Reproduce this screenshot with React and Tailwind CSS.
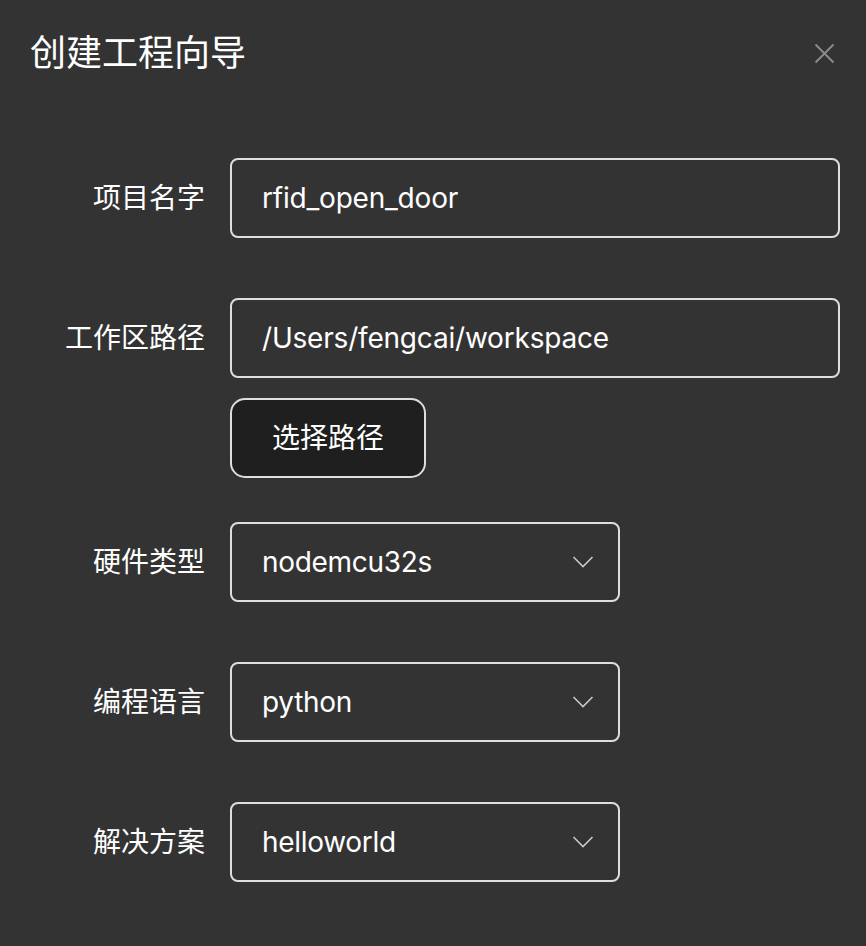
import React from 'react';

const font = { fontFamily: 'Inter, "Noto Sans CJK SC", sans-serif' };

function Chevron() {
  return (
    <svg width="22" height="14" viewBox="0 0 22 14" fill="none" className="shrink-0">
      <path d="M1.5 2L11 11.5L20.5 2" stroke="#c8c8c8" strokeWidth="1.6" />
    </svg>
  );
}

function Row({ label, children, className = '' }) {
  return (
    <div className={`flex ${className}`}>
      <div className="w-[230px] shrink-0 pr-[25px] h-[80px] flex items-center justify-end text-[28px] text-white">
        {label}
      </div>
      <div className="flex-1 min-w-0">{children}</div>
    </div>
  );
}

function TextBox({ value }) {
  return (
    <div className="h-[80px] rounded-[8px] border-2 border-[#dedee2] flex items-center px-[30px] text-[28px] text-white tracking-[-0.2px]">
      {value}
    </div>
  );
}

function SelectBox({ value }) {
  return (
    <div className="w-[390px] h-[80px] rounded-[8px] border-2 border-[#dedee2] flex items-center justify-between pl-[30px] pr-[24px] text-[28px] text-white tracking-[-0.3px]">
      <span>{value}</span>
      <Chevron />
    </div>
  );
}

export default function App() {
  return (
    <div className="min-h-screen bg-[#333333]" style={font}>
      <div className="h-[106px] flex items-center justify-between pl-[30px] pr-[31px]">
        <h1 className="text-[36px] text-white font-normal">创建工程向导</h1>
        <svg width="21" height="21" viewBox="0 0 21 21" fill="none">
          <path d="M1.5 1.5L19.5 19.5M19.5 1.5L1.5 19.5" stroke="#8c8c8c" strokeWidth="1.8" />
        </svg>
      </div>

      <div className="mt-[52px] pr-[26px]">
        <Row label="项目名字" className="mb-[60px]">
          <TextBox value="rfid_open_door" />
        </Row>

        <Row label="工作区路径" className="mb-[44px]">
          <TextBox value="/Users/fengcai/workspace" />
          <button className="mt-[20px] w-[196px] h-[80px] rounded-[15px] border-2 border-[#dedee2] bg-[#1f1f1f] text-white text-[28px]">
            选择路径
          </button>
        </Row>

        <Row label="硬件类型" className="mb-[60px]">
          <SelectBox value="nodemcu32s" />
        </Row>

        <Row label="编程语言" className="mb-[60px]">
          <SelectBox value="python" />
        </Row>

        <Row label="解决方案">
          <SelectBox value="helloworld" />
        </Row>
      </div>
    </div>
  );
}
